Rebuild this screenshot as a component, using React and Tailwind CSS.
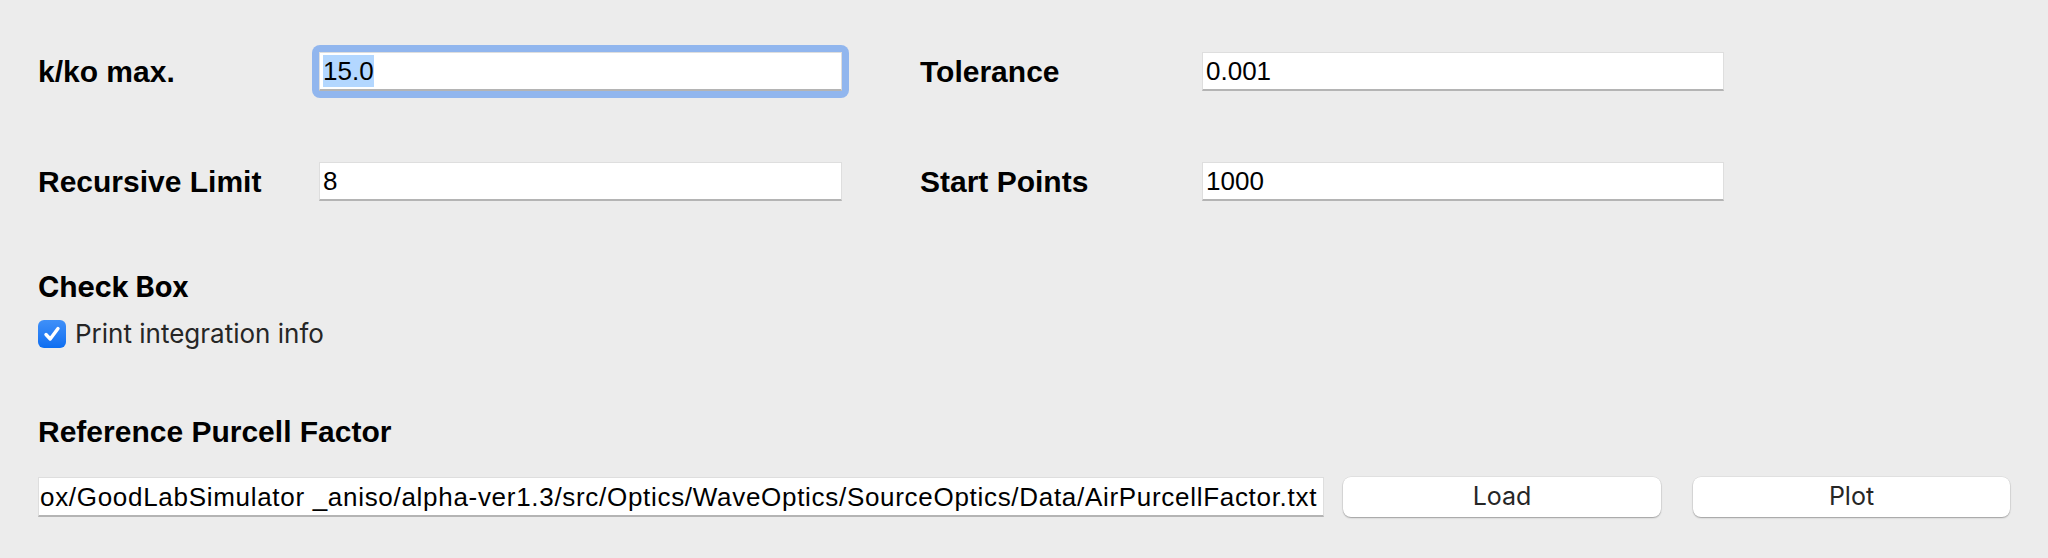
// App.jsx — panel ustawień symulacji (k/ko, tolerancja, plik referencyjny)
import { useState } from "react";

const labelFont = { fontFamily: '"Liberation Sans", Arial, sans-serif' };
const sysFont = { fontFamily: 'Inter, "Liberation Sans", Arial, sans-serif' };

function Field({ value, selected }) {
  return (
    <div
      style={labelFont}
      className="flex h-[39px] w-full items-center border border-[#dedede] border-b-[#b4b4b4] border-b-2 bg-white pl-[3px] text-[26px] leading-none text-black"
    >
      {selected ? <span className="bg-[#b3d7ff] py-[3px]">{value}</span> : value}
    </div>
  );
}

function Row({ left, right, className = "" }) {
  return (
    <div className={`flex items-center ${className}`}>
      <div style={labelFont} className="w-[281px] text-[30px] font-bold leading-[30px] text-black">
        {left.label}
      </div>
      <div className="w-[523px]">
        {left.focused ? (
          <div className="-m-[7px] rounded-[8px] bg-[#91b6ee] p-[7px]">
            <Field value={left.value} selected />
          </div>
        ) : (
          <Field value={left.value} />
        )}
      </div>
      <div style={labelFont} className="ml-[78px] w-[282px] text-[30px] font-bold leading-[30px] text-black">
        {right.label}
      </div>
      <div className="w-[522px]">
        <Field value={right.value} />
      </div>
    </div>
  );
}

export default function App() {
  const [printInfo, setPrintInfo] = useState(true);
  // ścieżka jest dłuższa niż pole — widać tylko koniec, jak w przewiniętym polu tekstowym
  const path =
    "ox/GoodLabSimulator _aniso/alpha-ver1.3/src/Optics/WaveOptics/SourceOptics/Data/AirPurcellFactor.txt";

  return (
    <div className="min-h-[558px] w-full bg-[#ececec] pl-[38px] pt-[52px]">
      <Row
        left={{ label: "k/ko max.", value: "15.0", focused: true }}
        right={{ label: "Tolerance", value: "0.001" }}
      />
      <Row
        className="mt-[71px]"
        left={{ label: "Recursive Limit", value: "8" }}
        right={{ label: "Start Points", value: "1000" }}
      />

      {/* Check box */}
      <div style={sysFont} className="mt-[71px] text-[29px] font-bold leading-[30px] text-black">
        Check Box
      </div>
      <label className="mt-[18px] flex h-[28px] cursor-pointer items-center">
        <button
          type="button"
          onClick={() => setPrintInfo(!printInfo)}
          className={`flex h-[28px] w-[28px] shrink-0 items-center justify-center rounded-[6px] ${
            printInfo ? "bg-gradient-to-b from-[#3f90f8] to-[#0b6ef1]" : "border border-[#b0b0b0] bg-white"
          }`}
        >
          {printInfo && (
            <svg width="20" height="20" viewBox="0 0 20 20" fill="none">
              <path d="M4 10.5 L8.2 15 L16 4.5" stroke="white" strokeWidth="3.4" strokeLinecap="round" strokeLinejoin="round" />
            </svg>
          )}
        </button>
        <span style={sysFont} className="ml-[9px] text-[26px] leading-none text-[#262626]">
          Print integration info
        </span>
      </label>

      {/* Reference Purcell Factor */}
      <div style={labelFont} className="mt-[69px] text-[30px] font-bold leading-[30px] text-black">
        Reference Purcell Factor
      </div>
      <div className="mt-[30px] flex items-center">
        <div
          style={labelFont}
          className="flex h-[40px] w-[1286px] items-center overflow-hidden whitespace-nowrap border border-[#dedede] border-b-[#b4b4b4] border-b-2 bg-white pl-[1px] text-[26px] leading-none tracking-[0.7px] text-black"
        >
          {path}
        </div>
        <button
          style={sysFont}
          className="ml-[19px] h-[40px] w-[318px] rounded-[8px] bg-white text-[25px] text-[#262626] shadow-[0_1px_1.5px_rgba(0,0,0,0.3),0_0_0_0.5px_rgba(0,0,0,0.08)]"
        >
          Load
        </button>
        <button
          style={sysFont}
          className="ml-[32px] h-[40px] w-[317px] rounded-[8px] bg-white text-[25px] text-[#262626] shadow-[0_1px_1.5px_rgba(0,0,0,0.3),0_0_0_0.5px_rgba(0,0,0,0.08)]"
        >
          Plot
        </button>
      </div>
    </div>
  );
}
